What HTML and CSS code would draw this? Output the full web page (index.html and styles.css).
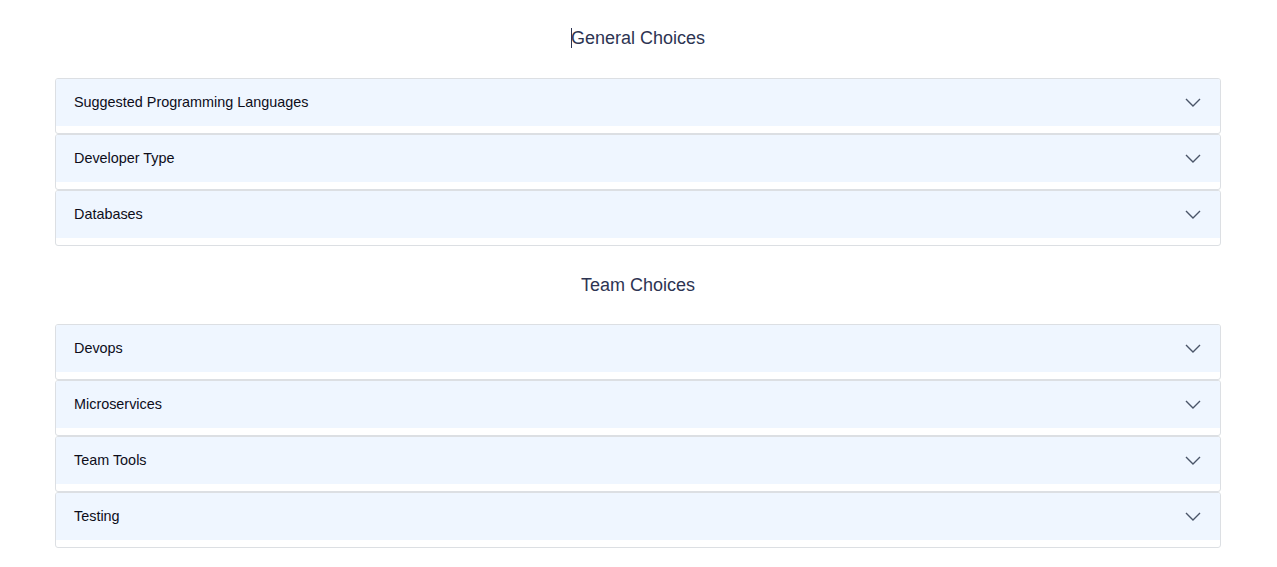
FILE: index.html
```html
<!DOCTYPE html>
<html>
<head>
<meta charset="utf-8">
<link rel="stylesheet" href="styles.css">
</head>
<body>
<main class="page">
  <section class="section">
    <h2 class="section-title"><span class="caret"></span>General Choices</h2>
    <div class="accordion">
      <div class="item"><div class="item-header"><span>Suggested Programming Languages</span><svg class="chev" viewBox="0 0 16 9" width="16" height="9"><path d="M1 1l7 7 7-7" fill="none" stroke="#4a5568" stroke-width="1.4"/></svg></div><div class="item-body"></div></div>
      <div class="item"><div class="item-header"><span>Developer Type</span><svg class="chev" viewBox="0 0 16 9" width="16" height="9"><path d="M1 1l7 7 7-7" fill="none" stroke="#4a5568" stroke-width="1.4"/></svg></div><div class="item-body"></div></div>
      <div class="item"><div class="item-header"><span>Databases</span><svg class="chev" viewBox="0 0 16 9" width="16" height="9"><path d="M1 1l7 7 7-7" fill="none" stroke="#4a5568" stroke-width="1.4"/></svg></div><div class="item-body"></div></div>
    </div>
  </section>
  <section class="section">
    <h2 class="section-title second">Team Choices</h2>
    <div class="accordion">
      <div class="item"><div class="item-header"><span>Devops</span><svg class="chev" viewBox="0 0 16 9" width="16" height="9"><path d="M1 1l7 7 7-7" fill="none" stroke="#4a5568" stroke-width="1.4"/></svg></div><div class="item-body"></div></div>
      <div class="item"><div class="item-header"><span>Microservices</span><svg class="chev" viewBox="0 0 16 9" width="16" height="9"><path d="M1 1l7 7 7-7" fill="none" stroke="#4a5568" stroke-width="1.4"/></svg></div><div class="item-body"></div></div>
      <div class="item"><div class="item-header"><span>Team Tools</span><svg class="chev" viewBox="0 0 16 9" width="16" height="9"><path d="M1 1l7 7 7-7" fill="none" stroke="#4a5568" stroke-width="1.4"/></svg></div><div class="item-body"></div></div>
      <div class="item"><div class="item-header"><span>Testing</span><svg class="chev" viewBox="0 0 16 9" width="16" height="9"><path d="M1 1l7 7 7-7" fill="none" stroke="#4a5568" stroke-width="1.4"/></svg></div><div class="item-body"></div></div>
    </div>
  </section>
</main>
</body>
</html>
```
FILE: styles.css
```css
* { box-sizing: border-box; }
html, body { margin: 0; padding: 0; background: #fff; }
body { font-family: "Liberation Sans", Arial, sans-serif; color: #000; }
.page { width: 1166px; margin: 0 0 0 55px; }
.section-title {
  margin: 0;
  height: 78px;
  display: flex;
  align-items: center;
  justify-content: center;
  font-size: 18px;
  font-weight: normal;
  color: #2d3452;
  padding-bottom: 2px;
}
.section-title.second { padding-bottom: 0; padding-top: 1px; }
.caret {
  display: inline-block;
  width: 1px;
  height: 20px;
  background: #2d3452;
  margin-right: -1px;
}
.accordion { display: flex; flex-direction: column; }
.item {
  border: 1px solid #dcdfe3;
  border-radius: 3px;
  overflow: hidden;
}
.item-header {
  height: 47px;
  background: #eff6ff;
  display: flex;
  align-items: center;
  justify-content: space-between;
  padding: 0 19px 2px 18px;
  font-size: 14.4px;
  color: #0d0d1a;
}
.item-body { height: 7px; }
.chev { display: block; margin-top: 1px; }
```
